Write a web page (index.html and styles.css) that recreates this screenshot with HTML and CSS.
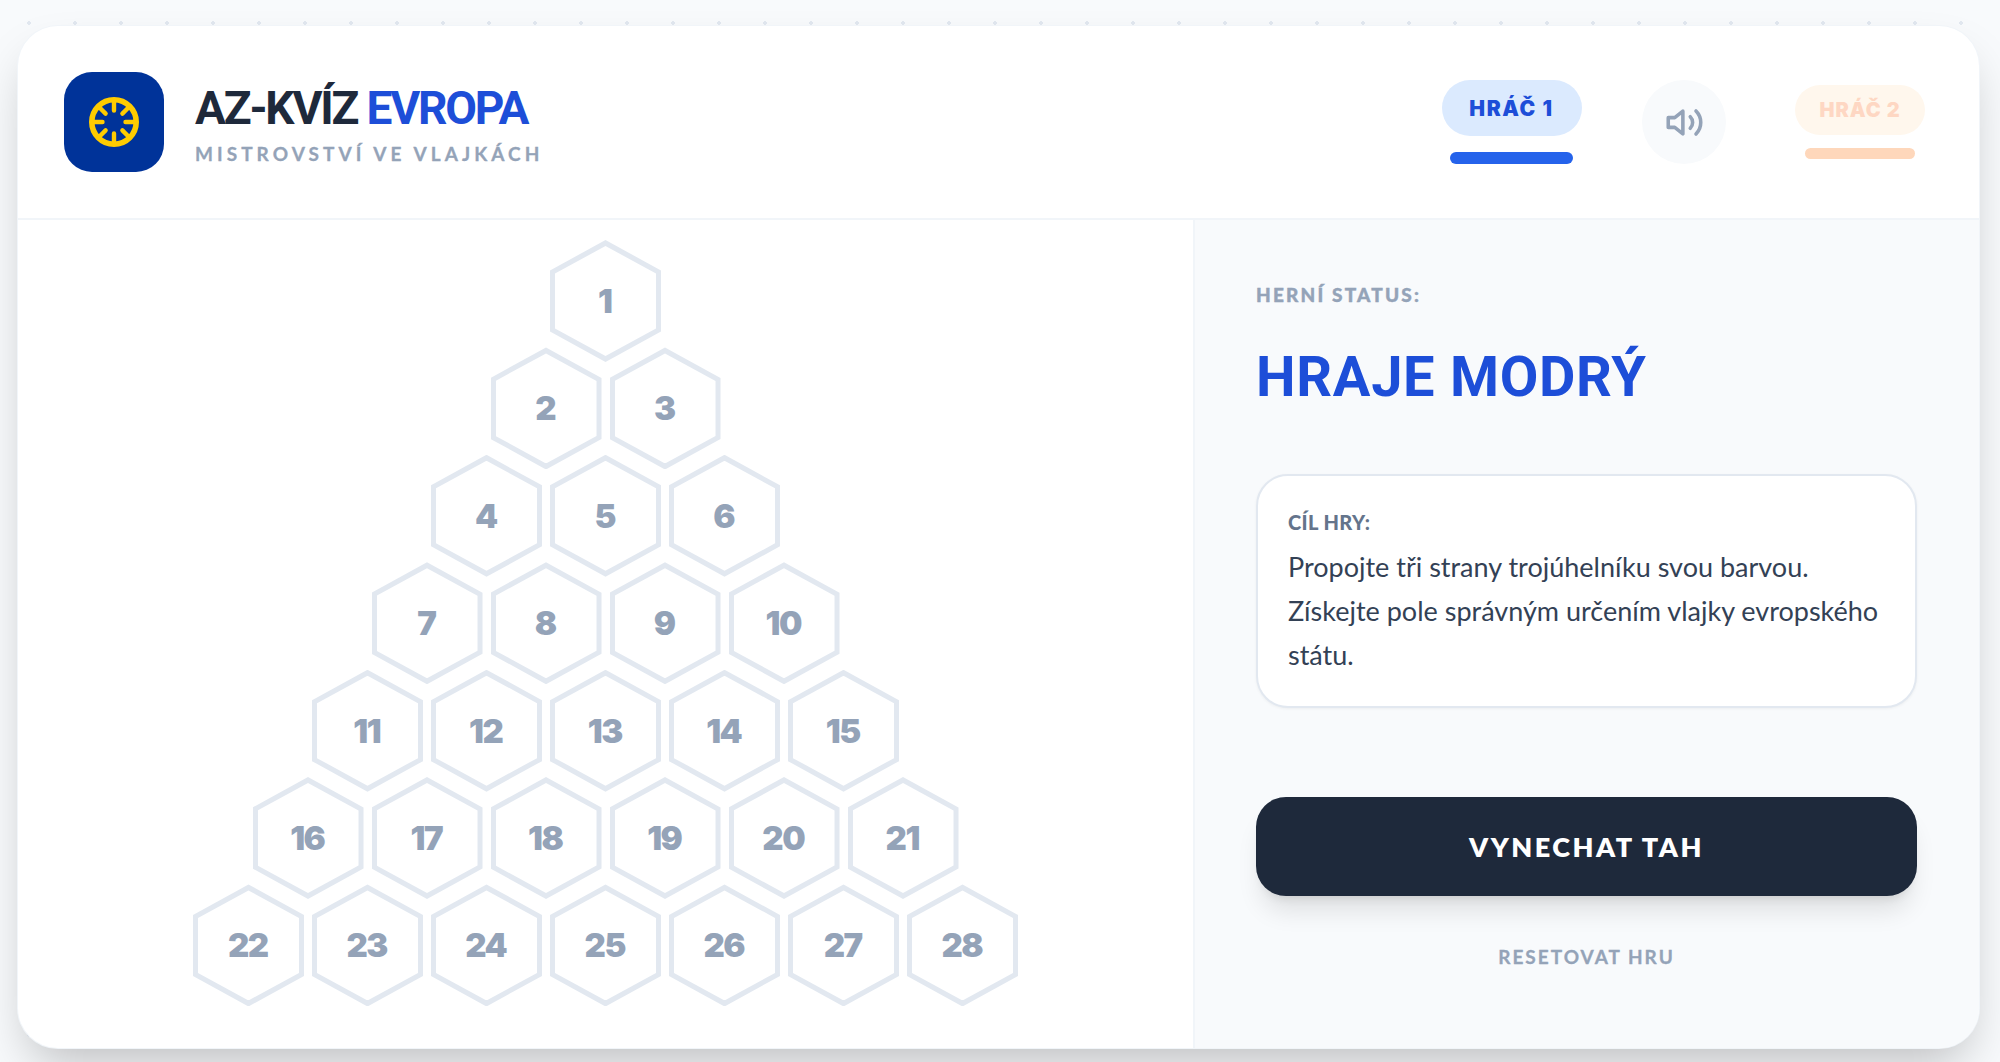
FILE: index.html
```html
<!DOCTYPE html>
<html lang="cs">
<head>
    <meta charset="UTF-8">
    <meta name="viewport" content="width=device-width, initial-scale=1.0">
    <title>AZ-Kvíz Evropa</title>
    <link rel="stylesheet" href="styles.css">
</head>
<body>
    <div class="card">
        <header class="top-bar">
            <div class="brand">
                <div class="logo">
                    <svg viewBox="0 0 50 50" width="50" height="50" fill="none" stroke="#ffcc00" stroke-linecap="round">
                        <circle cx="25" cy="25" r="22.2" stroke-width="5.6"/>
                        <path stroke-width="4.4" d="M25 5V13.5M25 36.5V45M5 25H13.5M36.5 25H45M11 11L16.6 16.6M33.4 33.4L39 39M39 11L33.4 16.6M16.6 33.4L11 39"/>
                    </svg>
                </div>
                <div class="brand-text">
                    <h1>AZ-KVÍZ <span>EVROPA</span></h1>
                    <p class="subtitle">MISTROVSTVÍ VE VLAJKÁCH</p>
                </div>
            </div>
            <div class="players">
                <div class="player player-one">
                    <div class="player-name">HRÁČ 1</div>
                    <div class="player-bar"></div>
                </div>
                <button class="sound-btn" aria-label="Zvuk">
                    <svg viewBox="0 0 24 24" width="39" height="39" fill="none" stroke="#94a3b8" stroke-width="2.2" stroke-linecap="round" stroke-linejoin="round">
                        <polygon points="11 5 6 9 2 9 2 15 6 15 11 19 11 5"/>
                        <path d="M15.54 8.46a5 5 0 0 1 0 7.07"/>
                        <path d="M19.07 4.93a10 10 0 0 1 0 14.14"/>
                    </svg>
                </button>
                <div class="player player-two">
                    <div class="player-name">HRÁČ 2</div>
                    <div class="player-bar"></div>
                </div>
            </div>
        </header>

        <div class="game">
            <main class="board">
                <div class="hex-row"><div class="hex"><span>1</span></div></div>
                <div class="hex-row"><div class="hex"><span>2</span></div><div class="hex"><span>3</span></div></div>
                <div class="hex-row"><div class="hex"><span>4</span></div><div class="hex"><span>5</span></div><div class="hex"><span>6</span></div></div>
                <div class="hex-row"><div class="hex"><span>7</span></div><div class="hex"><span>8</span></div><div class="hex"><span>9</span></div><div class="hex"><span>10</span></div></div>
                <div class="hex-row"><div class="hex"><span>11</span></div><div class="hex"><span>12</span></div><div class="hex"><span>13</span></div><div class="hex"><span>14</span></div><div class="hex"><span>15</span></div></div>
                <div class="hex-row"><div class="hex"><span>16</span></div><div class="hex"><span>17</span></div><div class="hex"><span>18</span></div><div class="hex"><span>19</span></div><div class="hex"><span>20</span></div><div class="hex"><span>21</span></div></div>
                <div class="hex-row"><div class="hex"><span>22</span></div><div class="hex"><span>23</span></div><div class="hex"><span>24</span></div><div class="hex"><span>25</span></div><div class="hex"><span>26</span></div><div class="hex"><span>27</span></div><div class="hex"><span>28</span></div></div>
            </main>

            <aside class="panel">
                <div class="status-label">HERNÍ STATUS:</div>
                <div class="status-text">HRAJE MODRÝ</div>
                <div class="goal-box">
                    <div class="goal-title">CÍL HRY:</div>
                    <p>Propojte tři strany trojúhelníku svou barvou. Získejte pole správným určením vlajky evropského státu.</p>
                </div>
                <button class="skip-btn">VYNECHAT TAH</button>
                <button class="reset-btn">RESETOVAT HRU</button>
            </aside>
        </div>
    </div>
</body>
</html>
```

FILE: styles.css
```css
:root {
    --blue: #1d4ed8;
    --dark: #1e293b;
    --muted: #94a3b8;
    --line: #e2e8f0;
    --soft: #f8fafc;
}

* {
    box-sizing: border-box;
    margin: 0;
    padding: 0;
}

html, body {
    height: 100%;
    overflow: hidden;
}

body {
    font-family: 'Lato', sans-serif;
    background-color: var(--soft);
    background-image: radial-gradient(var(--line) 1.6px, transparent 1.8px);
    background-size: 46px 46px;
    background-position: 6px 0;
    padding: 26px 21px 14px 18px;
}

.card {
    height: 100%;
    display: flex;
    flex-direction: column;
    background: white;
    border-radius: 40px;
    overflow: hidden;
    box-shadow: 0 0 0 1px #f1f5f9, 0 25px 50px -12px rgba(0,0,0,0.25);
}

.top-bar {
    height: 194px;
    flex-shrink: 0;
    display: flex;
    align-items: center;
    justify-content: space-between;
    padding: 0 54px 0 46px;
    border-bottom: 2px solid #f1f5f9;
}

.brand {
    display: flex;
    align-items: center;
    gap: 31px;
}

.brand-text {
    margin-top: 2px;
}

.logo {
    width: 100px;
    height: 100px;
    border-radius: 28px;
    background: #003399;
    display: flex;
    align-items: center;
    justify-content: center;
}

h1 {
    font-family: 'Roboto', sans-serif;
    font-size: 46px;
    font-weight: 700;
    line-height: 54px;
    letter-spacing: -2.2px;
    color: var(--dark);
}

h1 span {
    color: var(--blue);
}

.subtitle {
    font-size: 19px;
    font-weight: 700;
    line-height: 24px;
    letter-spacing: 4.05px;
    color: var(--muted);
    margin-top: 7px;
    -webkit-text-stroke: 0.3px var(--muted);
}

.players {
    display: flex;
    align-items: center;
}

.player {
    display: flex;
    flex-direction: column;
    align-items: center;
}

.player-name {
    display: flex;
    align-items: center;
    justify-content: center;
    border-radius: 999px;
    font-family: 'Inter', sans-serif;
    font-weight: 900;
}

.player-bar {
    border-radius: 6px;
}

.player-one .player-name {
    width: 140px;
    height: 56px;
    background: #dbeafe;
    color: var(--blue);
    font-size: 21px;
    letter-spacing: 1.6px;
}

.player-one .player-bar {
    width: 123px;
    height: 12px;
    margin-top: 16px;
    background: #2563eb;
}

.player-two .player-name {
    width: 130px;
    height: 50px;
    background: #fff7ed;
    color: #fed7c3;
    font-size: 20px;
    letter-spacing: 1px;
}

.player-two .player-bar {
    width: 110px;
    height: 11px;
    margin-top: 13px;
    background: #fed7bb;
}

.sound-btn {
    width: 84px;
    height: 84px;
    margin: 0 69px 0 60.5px;
    border: none;
    border-radius: 50%;
    background: var(--soft);
    display: flex;
    align-items: center;
    justify-content: center;
}

.game {
    flex: 1;
    display: flex;
    min-height: 0;
}

.board {
    flex: 1;
    padding-top: 20px;
}

.hex-row {
    display: flex;
    justify-content: center;
    gap: 8px;
    margin-bottom: -14.6px;
}

.hex {
    position: relative;
    width: 111px;
    height: 122px;
    display: flex;
    align-items: center;
    justify-content: center;
    background: var(--line);
    clip-path: polygon(50% 0, 100% 25%, 100% 75%, 50% 100%, 0 75%, 0 25%);
}

.hex::before {
    content: '';
    position: absolute;
    inset: 6px 5px;
    background: white;
    clip-path: polygon(50% 0, 100% 25%, 100% 75%, 50% 100%, 0 75%, 0 25%);
}

.hex span {
    position: relative;
    margin-left: -1.5px;
    font-family: 'Inter', sans-serif;
    font-size: 33px;
    font-weight: 900;
    letter-spacing: -1.5px;
    color: var(--muted);
}

.panel {
    width: 786px;
    flex-shrink: 0;
    display: flex;
    flex-direction: column;
    background: var(--soft);
    border-left: 2px solid #f1f5f9;
    padding: 63px 62px 0 61px;
}

.status-label {
    font-size: 19px;
    font-weight: 900;
    line-height: 24px;
    letter-spacing: 2.2px;
    color: var(--muted);
    -webkit-text-stroke: 0.4px var(--muted);
}

.status-text {
    font-family: 'Roboto', sans-serif;
    font-size: 56px;
    font-weight: 700;
    line-height: 64px;
    letter-spacing: 0.7px;
    color: var(--blue);
    margin-top: 38px;
}

.goal-box {
    width: 661px;
    height: 234px;
    margin-top: 65px;
    padding: 34px 25px 0 30px;
    background: white;
    border: 2px solid var(--line);
    border-radius: 32px;
    box-shadow: 0 1px 3px rgba(0,0,0,0.05);
}

.goal-title {
    font-size: 20px;
    font-weight: 900;
    line-height: 24px;
    letter-spacing: 0.4px;
    color: #64748b;
}

.goal-box p {
    font-size: 27px;
    line-height: 44px;
    color: #334155;
    margin-top: 11px;
}

.skip-btn {
    width: 661px;
    height: 99px;
    margin-top: 89px;
    border: none;
    border-radius: 30px;
    background: var(--dark);
    color: white;
    font-family: inherit;
    font-size: 27px;
    font-weight: 800;
    letter-spacing: 2.5px;
    box-shadow: 0 20px 25px -5px rgba(0,0,0,0.1), 0 8px 10px -6px rgba(0,0,0,0.1);
}

.reset-btn {
    margin-top: 49px;
    border: none;
    background: none;
    color: var(--muted);
    font-family: inherit;
    font-size: 19px;
    font-weight: 700;
    letter-spacing: 2px;
    line-height: 24px;
    -webkit-text-stroke: 0.3px var(--muted);
}
```
